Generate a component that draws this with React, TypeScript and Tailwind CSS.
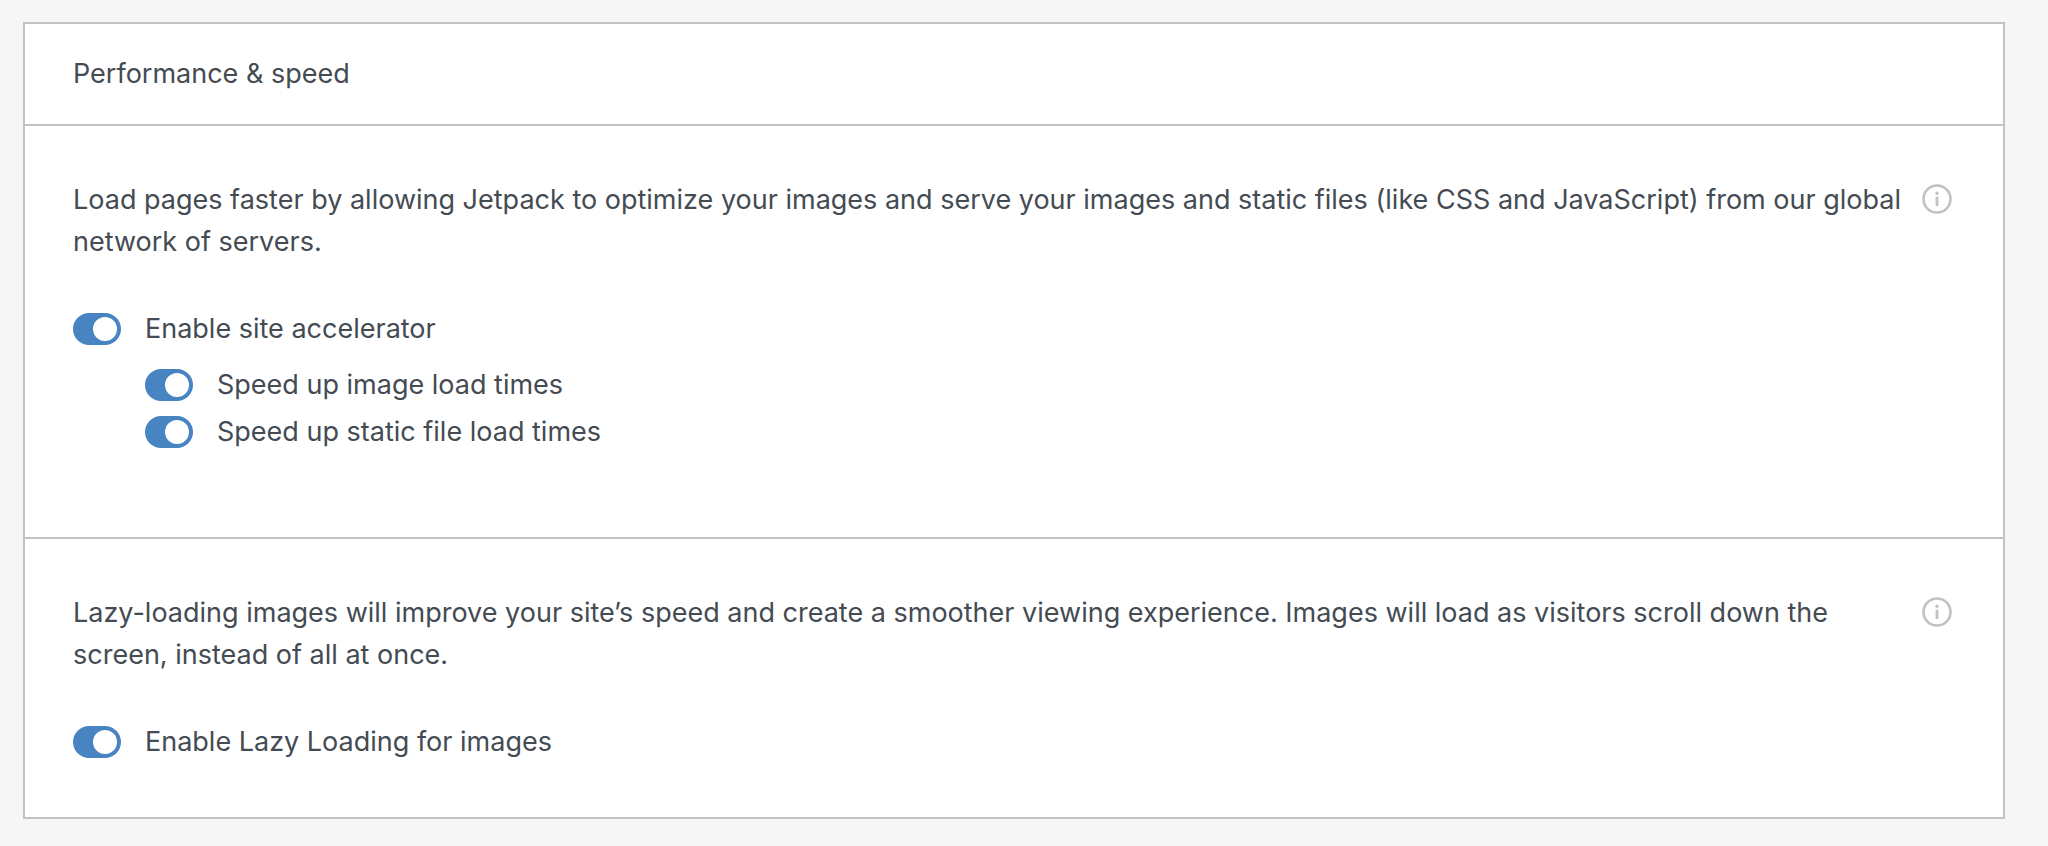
import { useId, useState } from 'react'
import type { ReactNode } from 'react'

type ToggleProps = {
  label: string
}

const Toggle = ({ label }: ToggleProps) => {
  const id = useId()
  const [checked, setChecked] = useState(true)

  return (
    <div className="flex items-center gap-6">
      <input
        id={id}
        type="checkbox"
        role="switch"
        checked={checked}
        onChange={(event) => setChecked(event.target.checked)}
        className="flex h-8 w-12 shrink-0 cursor-pointer appearance-none items-center rounded-full bg-[#a7aaad] px-1 before:size-6 before:rounded-full before:bg-white before:content-[''] checked:justify-end checked:bg-[#4883c2]"
      />
      <label htmlFor={id} className="cursor-pointer">
        {label}
      </label>
    </div>
  )
}

const InfoButton = () => (
  <button
    type="button"
    aria-label="Learn more"
    className="mt-[5px] shrink-0 cursor-pointer text-[#c1c2c6]"
  >
    <svg viewBox="0 0 30 30" className="size-[30px]" fill="none">
      <circle cx="15" cy="15" r="13.5" stroke="currentColor" strokeWidth="2.6" />
      <circle cx="15" cy="9.2" r="1.7" fill="currentColor" />
      <path d="M15 12.7v9.3" stroke="currentColor" strokeWidth="2.8" />
    </svg>
  </button>
)

type SectionProps = {
  description: string
  children: ReactNode
  className: string
}

const Section = ({ description, children, className }: SectionProps) => (
  <section
    className={`border-t-2 border-[#c1c2c6] pt-[53px] pr-[51px] pl-12 ${className}`}
  >
    <div className="flex items-start justify-between gap-3">
      <p>{description}</p>
      <InfoButton />
    </div>
    <div className="mt-[45px]">{children}</div>
  </section>
)

export default function App() {
  return (
    <main className="min-h-screen bg-[#f6f6f6] pt-[22px] pr-[43px] pb-6 pl-[23px] font-['Inter',sans-serif] text-[27px] leading-[42px] text-[#444b52]">
      <div className="border-2 border-[#c1c2c6] bg-white">
        <h2 className="px-12 pt-[29px] pb-[29px]">Performance &amp; speed</h2>

        <Section
          description="Load pages faster by allowing Jetpack to optimize your images and serve your images and static files (like CSS and JavaScript) from our global network of servers."
          className="pb-[84px]"
        >
          <Toggle label="Enable site accelerator" />
          <div className="mt-3.5 ml-18 flex flex-col gap-[5px]">
            <Toggle label="Speed up image load times" />
            <Toggle label="Speed up static file load times" />
          </div>
        </Section>

        <Section
          description="Lazy-loading images will improve your site’s speed and create a smoother viewing experience. Images will load as visitors scroll down the screen, instead of all at once."
          className="pb-[54px]"
        >
          <Toggle label="Enable Lazy Loading for images" />
        </Section>
      </div>
    </main>
  )
}
